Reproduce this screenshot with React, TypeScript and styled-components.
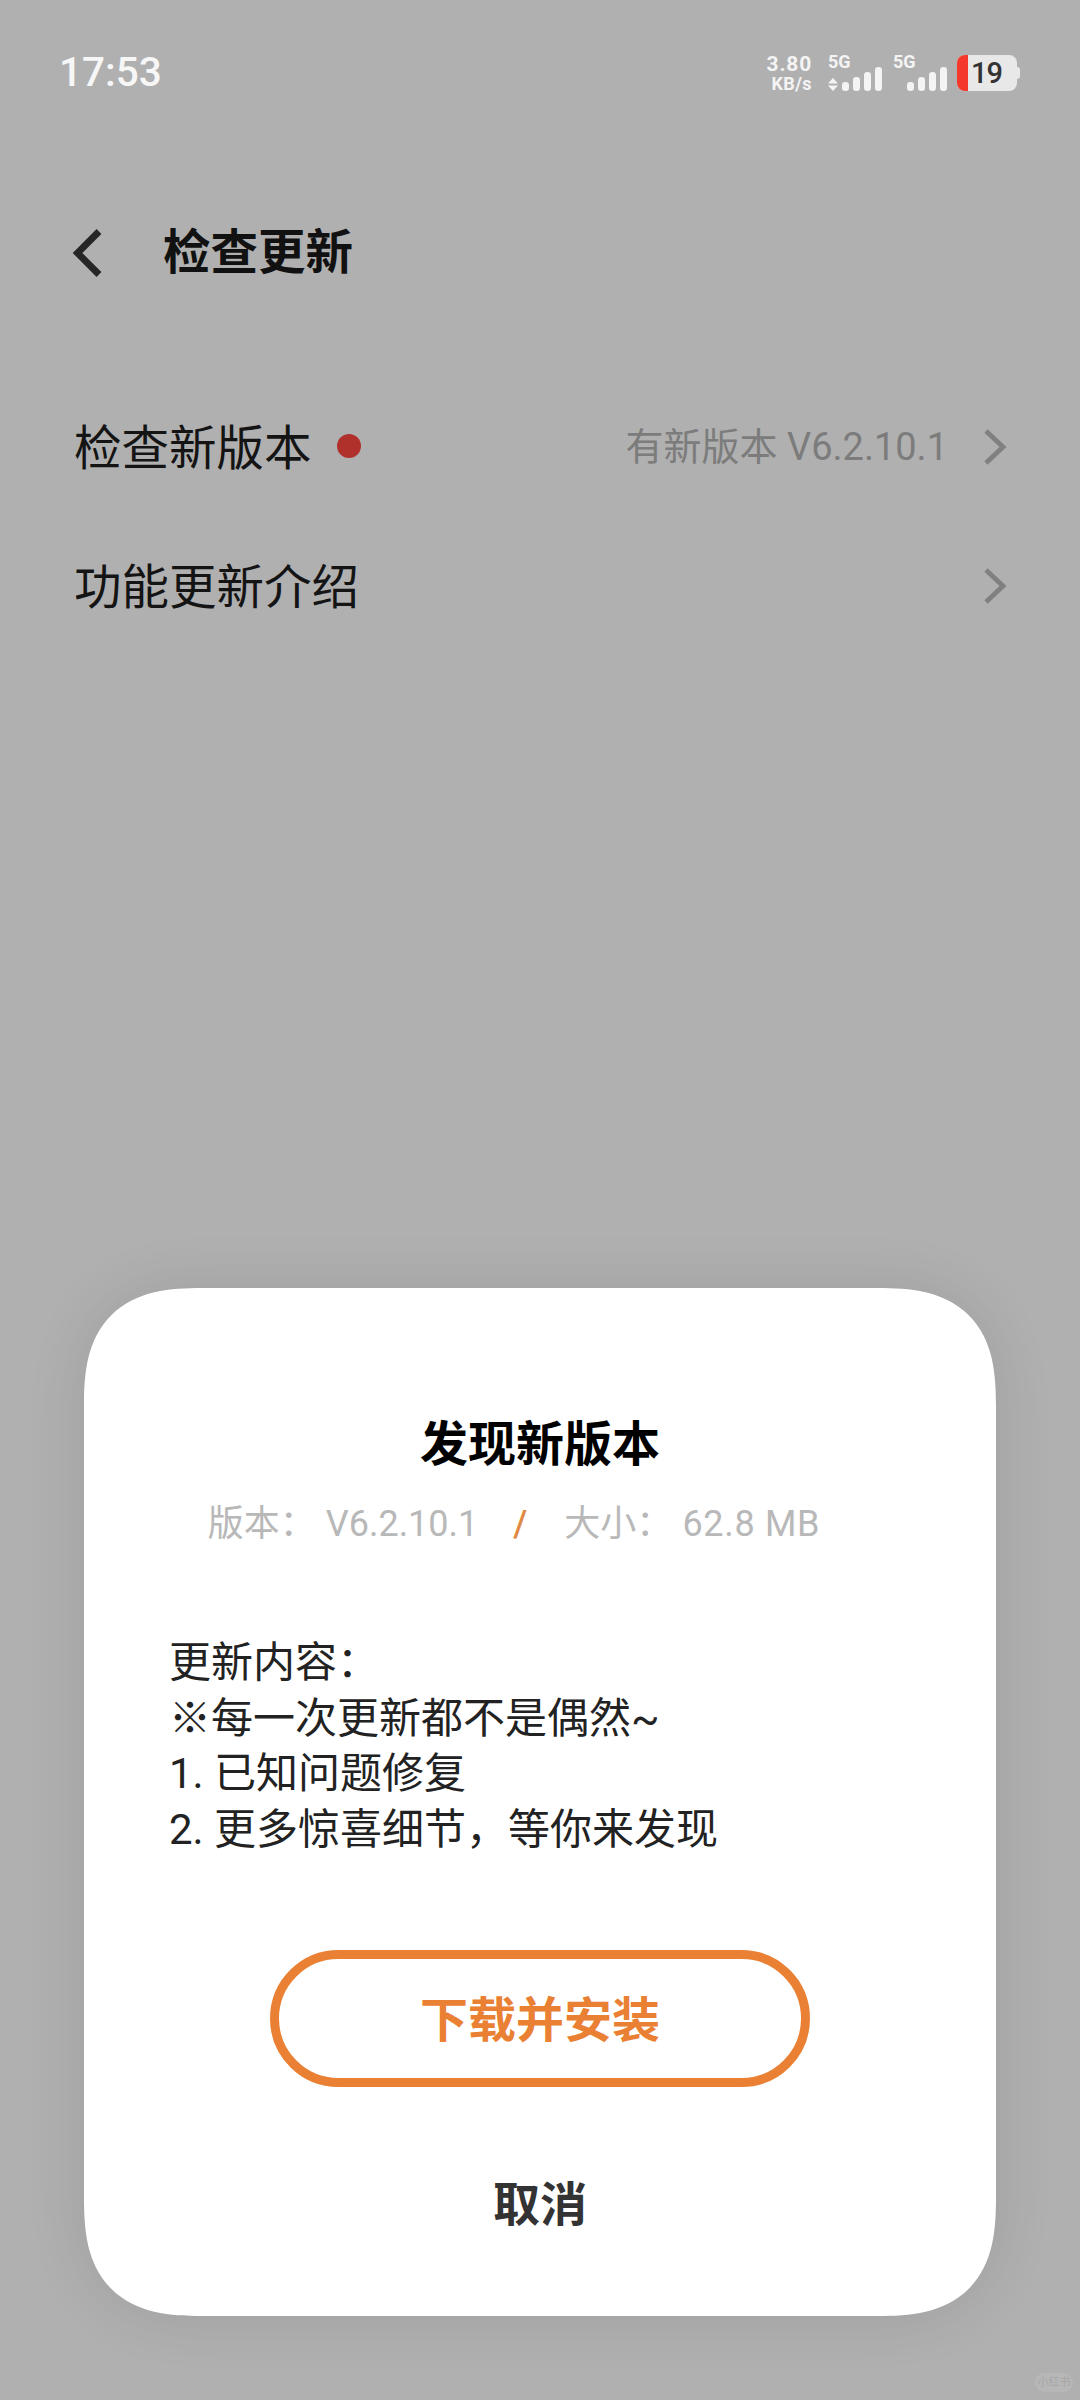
import React from "react";
import styled, { createGlobalStyle } from "styled-components";

const Global = createGlobalStyle`
  html, body { margin: 0; padding: 0; background: #b0b0b0; }
  body { font-family: Roboto, "Noto Sans CJK SC", sans-serif; }
  * { box-sizing: border-box; }
`;

const Page = styled.div`
  position: relative;
  width: 1080px;
  height: 2400px;
  background: #b0b0b0;
  overflow: hidden;
`;

const StatusBar = styled.div`
  height: 100px;
  padding: 49px 60px 0 59px;
  display: flex;
  justify-content: space-between;
  align-items: flex-start;
`;

const Clock = styled.div`
  font-size: 40.5px;
  line-height: 46px;
  font-weight: 500;
  color: #f7f7f7;
`;

const StatusIcons = styled.div`
  display: flex;
  align-items: flex-start;
  margin-top: 5px;
`;

const Speed = styled.div`
  width: 47px;
  margin-right: 16px;
  color: #f4f4f4;
  font-weight: 700;
  display: flex;
  flex-direction: column;
  align-items: flex-end;
  white-space: nowrap;
`;

const SpeedValue = styled.span`
  font-size: 21px;
  line-height: 20px;
  letter-spacing: 0.8px;
`;

const SpeedUnit = styled.span`
  font-size: 18px;
  line-height: 20px;
  letter-spacing: 0.4px;
`;

const NetGroup = styled.div<{ $ml: number }>`
  width: 54px;
  margin-left: ${(p) => p.$ml}px;
  padding-top: 2px;
  display: flex;
  flex-direction: column;
  flex: none;
`;

const NetLabel = styled.div`
  height: 11px;
  white-space: nowrap;
  font-size: 18px;
  line-height: 11px;
  font-weight: 700;
  color: #f4f4f4;
`;

const Battery = styled.div`
  position: relative;
  width: 63px;
  height: 36px;
  margin-left: 10px;
  margin-top: 1px;
  flex: none;
`;

const BatteryBody = styled.div`
  width: 60px;
  height: 36px;
  border-radius: 8px;
  background: #e8e8e8;
  overflow: hidden;
  display: flex;
`;

const BatteryLevel = styled.div`
  width: 11px;
  background: #f4392c;
`;

const BatteryText = styled.div`
  margin-left: 3px;
  font-size: 29px;
  line-height: 36px;
  font-weight: 500;
  letter-spacing: -1px;
  color: #333;
`;

const BatteryCap = styled.div`
  position: absolute;
  right: 0;
  top: 12px;
  width: 3px;
  height: 12px;
  border-radius: 0 3px 3px 0;
  background: #e8e8e8;
`;

const Header = styled.div`
  height: 106px;
  margin-top: 100px;
  padding-left: 72px;
  display: flex;
  align-items: center;
`;

const BackIcon = styled.svg`
  width: 30px;
  height: 48px;
  flex: none;
`;

const HeaderTitle = styled.div`
  margin-left: 61px;
  font-size: 47.5px;
  font-weight: 700;
  color: #111;
  line-height: 60px;
`;

const List = styled.div`
  margin-top: 91px;
  padding: 0 73px 0 74px;
  display: flex;
  flex-direction: column;
  gap: 39px;
`;

const Row = styled.div`
  height: 100px;
  display: flex;
  align-items: center;
`;

const RowLabel = styled.div`
  padding-top: 4px;
  font-size: 47.5px;
  color: #141414;
  font-weight: 400;
  line-height: 60px;
`;

const Dot = styled.span`
  width: 24px;
  height: 24px;
  border-radius: 50%;
  background: #b0302c;
  margin-left: 25px;
  margin-top: -2px;
`;

const RowValue = styled.div`
  margin-left: auto;
  font-size: 38px;
  line-height: 50px;
  color: #7c7c7c;
`;

const Chevron = styled.svg<{ $gap: number }>`
  width: 24px;
  height: 38px;
  margin-left: ${(p) => p.$gap}px;
  flex: none;
`;

const Dialog = styled.div`
  position: absolute;
  left: 84px;
  top: 1288px;
  width: 912px;
  height: 1028px;
  background: #fff;
  border-radius: 118px;
  corner-shape: superellipse(1.4);
  box-shadow: 0 0 60px rgba(0, 0, 0, 0.1);
  display: flex;
  flex-direction: column;
  align-items: center;
`;

const DialogTitle = styled.div`
  margin-top: 126px;
  font-size: 48px;
  line-height: 62px;
  font-weight: 700;
  color: #000;
`;

const Meta = styled.div`
  margin-top: 23px;
  margin-right: 52px;
  display: flex;
  align-items: center;
  font-size: 36px;
  line-height: 50px;
  color: #b8b8b8;
  white-space: nowrap;
`;

const MetaValue = styled.span<{ $spacing?: number }>`
  margin-left: 10px;
  letter-spacing: ${(p) => p.$spacing ?? 0}px;
`;

const Slash = styled.span`
  color: #e08a45;
  margin: 0 37px 0 35px;
  font-weight: 500;
`;

const Body = styled.div`
  align-self: flex-start;
  margin: 86px 0 0 85px;
  font-size: 42px;
  line-height: 55.7px;
  color: #222;
`;

const BodyLine = styled.div`
  height: 55.7px;
  white-space: nowrap;
`;

const InstallButton = styled.button`
  margin-top: 92px;
  width: 540px;
  height: 137px;
  flex: none;
  background: #fff;
  border: 9px solid #e98033;
  border-radius: 69px;
  font: inherit;
  font-size: 48px;
  font-weight: 700;
  color: #e98033;
  padding: 0 0 5px;
`;

const CancelButton = styled.button`
  margin-top: 85px;
  background: none;
  border: 0;
  padding: 0;
  font: inherit;
  font-size: 47px;
  line-height: 66px;
  font-weight: 700;
  color: #333;
`;

const Watermark = styled.div`
  position: absolute;
  left: 1035px;
  top: 2373px;
  width: 38px;
  height: 19px;
  border-radius: 10px;
  background: #b7b7b7;
  color: #a6a6a6;
  font-size: 11px;
  line-height: 19px;
  text-align: center;
  white-space: nowrap;
`;

const SignalIcon = ({ arrows }: { arrows?: boolean }) => (
  <svg width="54" height="24" viewBox="0 0 54 24">
    <g fill="#f4f4f4">
      {arrows && (
        <>
          <path d="M0 16.5 L5 11 L10 16.5 Z" />
          <path d="M0 18.5 L5 24 L10 18.5 Z" />
        </>
      )}
      <rect x="14" y="15" width="7" height="9" rx="3.2" />
      <rect x="25" y="10" width="7" height="14" rx="3.2" />
      <rect x="36" y="5" width="7" height="19" rx="3.2" />
      <rect x="47" y="0" width="7" height="24" rx="3.2" />
    </g>
  </svg>
);

const ChevronRight = ({ gap }: { gap: number }) => (
  <Chevron $gap={gap} viewBox="0 0 24 38">
    <path d="M3 3 L20 19 L3 35" fill="none" stroke="#808080" strokeWidth="4.8" />
  </Chevron>
);

export default function App() {
  return (
    <Page>
      <Global />
      <StatusBar>
        <Clock>17:53</Clock>
        <StatusIcons>
          <Speed>
            <SpeedValue>3.80</SpeedValue>
            <SpeedUnit>KB/s</SpeedUnit>
          </Speed>
          <NetGroup $ml={0}>
            <NetLabel>5G</NetLabel>
            <SignalIcon arrows />
          </NetGroup>
          <NetGroup $ml={11}>
            <NetLabel>5G</NetLabel>
            <SignalIcon />
          </NetGroup>
          <Battery>
            <BatteryBody>
              <BatteryLevel />
              <BatteryText>19</BatteryText>
            </BatteryBody>
            <BatteryCap />
          </Battery>
        </StatusIcons>
      </StatusBar>

      <Header>
        <BackIcon viewBox="0 0 30 48">
          <path d="M27 2.5 L5.5 24 L27 45.5" fill="none" stroke="#262626" strokeWidth="6.8" />
        </BackIcon>
        <HeaderTitle>检查更新</HeaderTitle>
      </Header>

      <List>
        <Row>
          <RowLabel>检查新版本</RowLabel>
          <Dot />
          <RowValue>有新版本 V6.2.10.1</RowValue>
          <ChevronRight gap={35} />
        </Row>
        <Row>
          <RowLabel>功能更新介绍</RowLabel>
          <RowValue />
          <ChevronRight gap={0} />
        </Row>
      </List>

      <Dialog>
        <DialogTitle>发现新版本</DialogTitle>
        <Meta>
          版本：
          <MetaValue>V6.2.10.1</MetaValue>
          <Slash>/</Slash>
          大小：
          <MetaValue $spacing={0.7}>62.8 MB</MetaValue>
        </Meta>
        <Body>
          <BodyLine>更新内容：</BodyLine>
          <BodyLine>※每一次更新都不是偶然~</BodyLine>
          <BodyLine>1. 已知问题修复</BodyLine>
          <BodyLine>2. 更多惊喜细节，等你来发现</BodyLine>
        </Body>
        <InstallButton>下载并安装</InstallButton>
        <CancelButton>取消</CancelButton>
      </Dialog>
      <Watermark>小红书</Watermark>
    </Page>
  );
}
